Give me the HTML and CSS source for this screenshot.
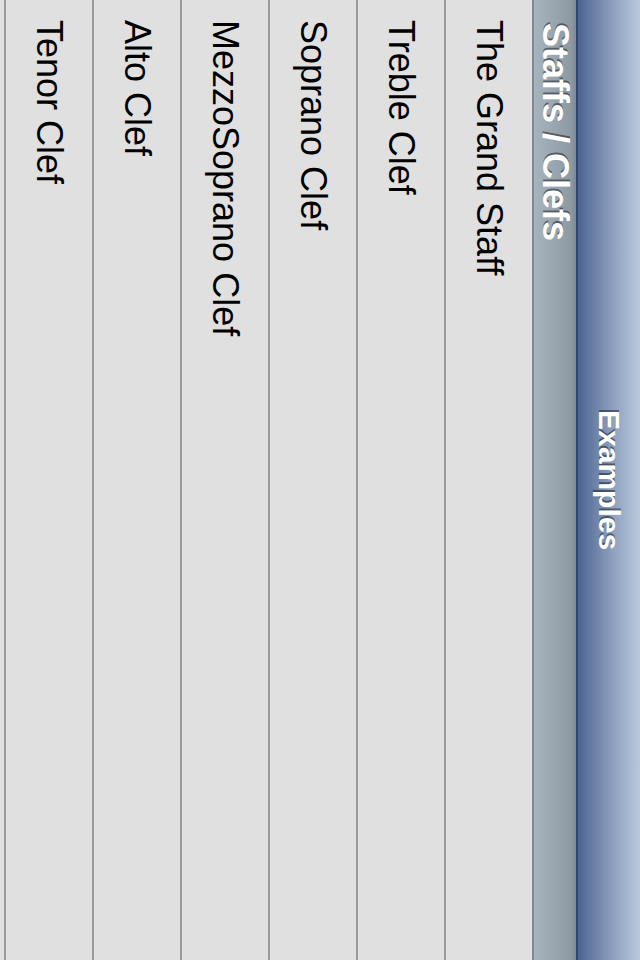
FILE: index.html
```html
<!DOCTYPE html>
<html>
<head>
<meta charset="utf-8">
<title>Examples</title>
<link rel="stylesheet" href="styles.css">
</head>
<body>
<div class="screen">
  <div class="navbar"><span class="nav-title">Examples</span></div>
  <div class="section-header">Staffs / Clefs</div>
  <div class="row">The Grand Staff</div>
  <div class="row">Treble Clef</div>
  <div class="row">Soprano Clef</div>
  <div class="row">MezzoSoprano Clef</div>
  <div class="row">Alto Clef</div>
  <div class="row">Tenor Clef</div>
</div>
</body>
</html>
```
FILE: styles.css
```css
html, body {
  margin: 0;
  padding: 0;
}
body {
  background: #e0e0e0;
}
.screen {
  width: 640px;
  height: 960px;
  overflow: hidden;
  writing-mode: vertical-rl;
  font-family: "Liberation Sans", Arial, sans-serif;
  background: #e0e0e0;
}
.navbar {
  block-size: 64px;
  box-sizing: border-box;
  border-left: 2px solid #30466b;
  background: linear-gradient(to left, #bac8dd 0%, #8c9fbd 45%, #4c6490 100%);
  display: flex;
  align-items: center;
  justify-content: center;
}
.nav-title {
  font-size: 30px;
  font-weight: bold;
  color: #fff;
  text-shadow: -2px 0 0 rgba(0, 0, 0, 0.45);
}
.section-header {
  block-size: 44px;
  box-sizing: border-box;
  border-left: 2px solid #7f8992;
  background: linear-gradient(to left, #7e8993 0px, #8d99a3 5px, #a8b4bd 100%);
  padding-inline-start: 23px;
  display: flex;
  align-items: center;
  font-size: 36px;
  font-weight: bold;
  color: #fff;
  text-shadow: -2px 0 0 rgba(0, 0, 0, 0.45);
}
.row {
  block-size: 88px;
  box-sizing: border-box;
  border-left: 2px solid #9a9a9a;
  padding-inline-start: 20px;
  display: flex;
  align-items: center;
  font-size: 36px;
  color: #000;
}
```
